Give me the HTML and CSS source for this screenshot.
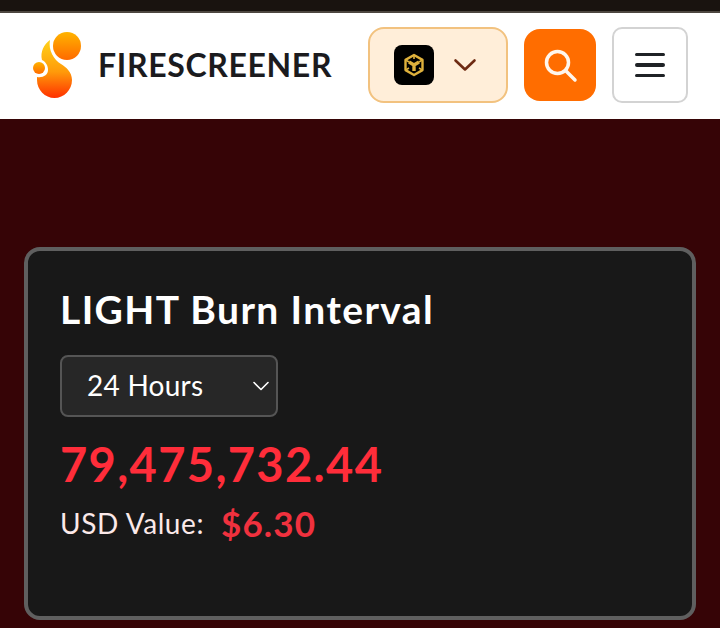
FILE: index.html
```html
<!DOCTYPE html>
<html lang="en">
<head>
<meta charset="utf-8">
<title>LIGHT Burn Interval</title>
<link rel="stylesheet" href="styles.css">
</head>
<body>
<div class="topbar"></div>
<header class="header">
  <div class="brand">
    <svg class="logo" width="48" height="66" viewBox="0 0 48 66">
      <defs>
        <linearGradient id="g1" x1="0" y1="0" x2="0" y2="1"><stop offset="0" stop-color="#ffb400"/><stop offset="1" stop-color="#ff6a00"/></linearGradient>
        <linearGradient id="g2" x1="0" y1="0" x2="0" y2="1"><stop offset="0" stop-color="#ffd21a"/><stop offset="0.55" stop-color="#ff9a0a"/><stop offset="1" stop-color="#ff3000"/></linearGradient>
      </defs>
      <circle cx="34" cy="14" r="14" fill="url(#g1)"/>
      <circle cx="6" cy="36" r="6" fill="url(#g1)"/>
      <path d="M17 8C11 12 7 20 9 28C13 30 15 34 15 38C15 43 10 46 4 45C4 46 4 47 4 48C4 58 12 66 21.500 66C31 66 39 58 39 48C39 40 33 35 28 32C21 28 15 18 17 8Z" fill="url(#g2)"/>
    </svg>
    <span class="brand-name">FIRESCREENER</span>
  </div>
  <div class="actions">
    <button class="chain" type="button">
      <span class="chain-icon">
        <svg width="24" height="24" viewBox="0 0 24 24" fill="none" stroke="#dfb13c" stroke-width="2.400" stroke-linejoin="round">
          <path d="M12 2l8.500 4.900v10.200L12 22l-8.500-4.900V6.900z"/>
          <path d="M7 9l5 3 5-3M12 12v6" stroke-width="3.400"/>
          <path d="M12 2v4M3.500 6.900L7 9M20.500 6.900L17 9M3.500 17.100L7 15M20.500 17.100L17 15" stroke-width="1.600"/>
        </svg>
      </span>
      <svg class="chain-caret" width="24" height="14" viewBox="0 0 24 14" fill="none" stroke="#6e2a12" stroke-width="2.600" stroke-linecap="round" stroke-linejoin="round"><path d="M2.500 2.500L12 11.500l9.500-9"/></svg>
    </button>
    <button class="search" type="button">
      <svg width="36" height="36" viewBox="0 0 36 36" fill="none" stroke="#fff6ec" stroke-width="3.500" stroke-linecap="round"><circle cx="15.500" cy="15.500" r="11"/><path d="M24 24L33 33"/></svg>
    </button>
    <button class="menu" type="button">
      <span class="bar"></span><span class="bar"></span><span class="bar"></span>
    </button>
  </div>
</header>
<main class="main">
  <section class="card">
    <h1 class="title">LIGHT Burn Interval</h1>
    <div class="select">
      <span class="select-value">24 Hours</span>
      <svg width="18" height="12" viewBox="0 0 18 12" fill="none" stroke="#fff" stroke-width="1.600" stroke-linecap="round" stroke-linejoin="round"><path d="M2 2.500l7 7 7-7"/></svg>
    </div>
    <div class="amount">79,475,732.44</div>
    <div class="usd"><span class="usd-label">USD Value:</span><span class="usd-value">$6.30</span></div>
  </section>
</main>
</body>
</html>
```
FILE: styles.css
```css
* { box-sizing: border-box; }
html, body { margin: 0; height: 100%; }
body {
  background: #360406;
  font-family: "Lato", "Open Sans", sans-serif;
  overflow: hidden;
}
.topbar {
  height: 13px;
  background: #19130f;
  border-bottom: 2px solid #4d4740;
}
.header {
  height: 106px;
  background: #fff;
  display: flex;
  align-items: center;
  justify-content: space-between;
  padding: 0 32px 2px 33px;
}
.brand { display: flex; align-items: center; gap: 17px; }
.logo { display: block; }
.brand-name {
  font-size: 32px;
  font-weight: 700;
  color: #1b1b1e;
  letter-spacing: 0.65px;
  line-height: 1;
}
.actions { display: flex; align-items: center; gap: 16px; }
button { padding: 0; cursor: pointer; }
.chain {
  width: 140px;
  height: 76px;
  background: #ffeed9;
  border: 2px solid #f2c27f;
  border-radius: 16px;
  display: flex;
  align-items: center;
  gap: 19px;
  padding-left: 24px;
}
.chain-icon {
  width: 40px;
  height: 40px;
  background: #000;
  border-radius: 8px;
  display: flex;
  align-items: center;
  justify-content: center;
}
.chain-caret { display: block; }
.search {
  width: 72px;
  height: 72px;
  background: #ff6d00;
  border: 0;
  border-radius: 16px;
  display: flex;
  align-items: center;
  justify-content: center;
}
.menu {
  width: 76px;
  height: 76px;
  background: #fff;
  border: 2px solid #d3d3d3;
  border-radius: 10px;
  display: flex;
  flex-direction: column;
  align-items: center;
  justify-content: center;
  gap: 7px;
}
.bar {
  width: 30px;
  height: 3.500px;
  border-radius: 2px;
  background: #1f2226;
}
.main { padding: 128px 24px 8px; }
.card {
  height: 373px;
  background: #181818;
  border: 4px solid #5f5f5f;
  border-radius: 16px;
  padding: 34px 32px;
}
.title {
  margin: 0;
  font-size: 39px;
  font-weight: 700;
  line-height: 48px;
  letter-spacing: 1.400px;
  color: #fff;
}
.select {
  margin-top: 22px;
  width: 218px;
  height: 62px;
  background: #272727;
  border: 2px solid #555;
  border-radius: 8px;
  padding: 0 6px 0 25px;
  display: flex;
  align-items: center;
  justify-content: space-between;
  color: #fff;
  font-size: 28px;
  letter-spacing: 0.25px;
}
.select-value { margin-top: -3px; }
.amount {
  margin-top: 17px;
  font-size: 47px;
  font-weight: 700;
  line-height: 60px;
  letter-spacing: 1.350px;
  color: #ff2d3a;
}
.usd { margin-top: 8px; display: flex; align-items: center; gap: 17px; }
.usd-label { font-size: 28px; letter-spacing: 0.6px; color: #fbe9e9; }
.usd-value { font-size: 35px; font-weight: 700; letter-spacing: 1.100px; color: #f0313e; }
```
